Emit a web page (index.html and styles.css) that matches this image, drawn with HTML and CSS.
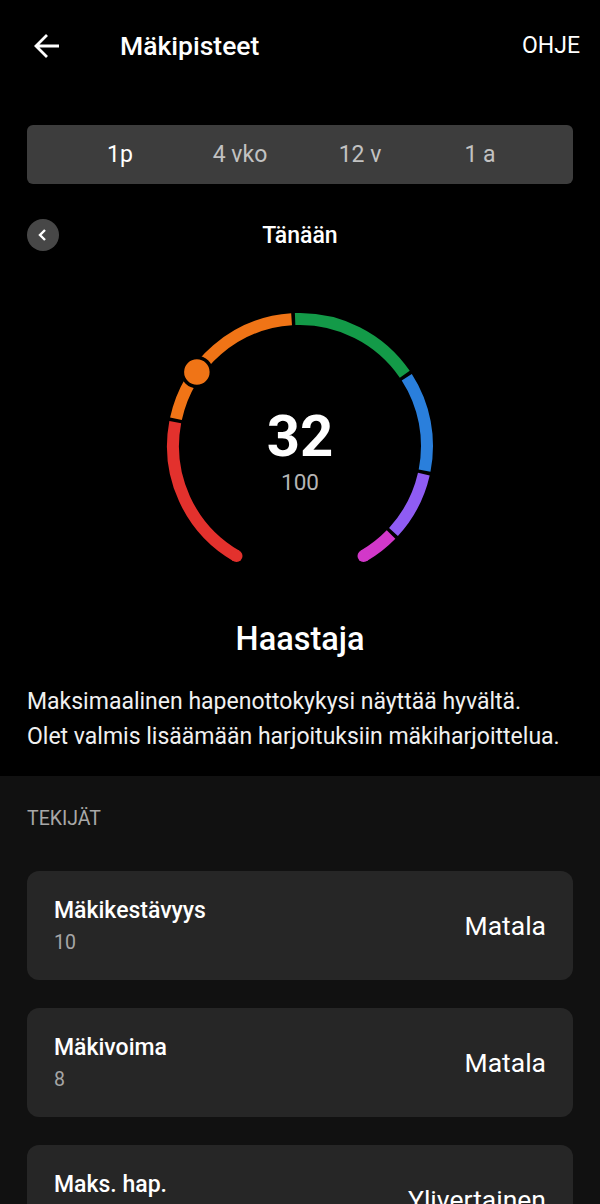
FILE: index.html
```html
<!DOCTYPE html>
<html lang="fi">
<head>
    <meta charset="UTF-8">
    <meta name="viewport" content="width=device-width, initial-scale=1.0">
    <title>Mäkipisteet</title>
    <link rel="stylesheet" href="styles.css">
</head>
<body>

<header class="topbar">
    <svg class="back" width="26" height="26" viewBox="0 0 26 26">
        <path d="M25 13H2.5M13 2L2 13l11 11" fill="none" stroke="#fff" stroke-width="2.8"/>
    </svg>
    <h1 class="title">Mäkipisteet</h1>
    <span class="help">OHJE</span>
</header>

<section class="range">
    <div class="tabs">
        <span class="tab active">1p</span>
        <span class="tab">4 vko</span>
        <span class="tab">12 v</span>
        <span class="tab">1 a</span>
    </div>

    <div class="day">
        <span class="prev">
            <svg width="12" height="14" viewBox="0 0 12 14">
                <path d="M8 2L3 7l5 5" fill="none" stroke="#fff" stroke-width="2.4"/>
            </svg>
        </span>
        <span class="day-label">Tänään</span>
    </div>
</section>

<section class="gauge">
    <svg class="ring" width="300" height="280" viewBox="0 0 300 280">
        <g fill="none" stroke-width="12">
            <!-- punainen 0-23 -->
            <path d="M86.5 250 A127 127 0 0 1 25.25 116.2" stroke="#e3312d"/>
            <!-- oranssi -->
            <path d="M25.96 112.73 A127 127 0 0 1 141.58 13.28" stroke="#f07416"/>
            <!-- vihreä -->
            <path d="M145.12 13.09 A127 127 0 0 1 254.79 68.25" stroke="#139a48"/>
            <!-- sininen -->
            <path d="M256.76 71.2 A127 127 0 0 1 274.59 164.66" stroke="#2a7fdc"/>
            <!-- violetti -->
            <path d="M273.84 168.14 A127 127 0 0 1 243.48 225.96" stroke="#8f5cf3"/>
            <!-- magenta -->
            <path d="M241.05 228.54 A127 127 0 0 1 213.5 250" stroke="#d238c9"/>
        </g>
        <circle cx="86.5" cy="250" r="6" fill="#e3312d"/>
        <circle cx="213.5" cy="250" r="6" fill="#d238c9"/>
        <circle cx="46.86" cy="65.9" r="14.5" fill="#f07416" stroke="#000" stroke-width="3.5"/>
    </svg>
    <div class="score">
        <div class="value">32</div>
        <div class="max">100</div>
    </div>
</section>

<section class="summary">
    <h2>Haastaja</h2>
    <p>Maksimaalinen hapenottokykysi näyttää hyvältä.<br>Olet valmis lisäämään harjoituksiin mäkiharjoittelua.</p>
</section>

<section class="factors">
    <div class="section-title">TEKIJÄT</div>

    <div class="card">
        <div>
            <div class="card-name">Mäkikestävyys</div>
            <div class="card-num">10</div>
        </div>
        <div class="card-level">Matala</div>
    </div>

    <div class="card">
        <div>
            <div class="card-name">Mäkivoima</div>
            <div class="card-num">8</div>
        </div>
        <div class="card-level">Matala</div>
    </div>

    <div class="card">
        <div>
            <div class="card-name">Maks. hap.</div>
            <div class="card-num">51</div>
        </div>
        <div class="card-level">Ylivertainen</div>
    </div>
</section>

</body>
</html>
```

FILE: styles.css
```css
body {
    font-family: Roboto, "Noto Sans", sans-serif;
    background-color: #000;
    color: #fff;
    margin: 0;
    padding: 0;
}

.topbar {
    display: flex;
    align-items: center;
    height: 90px;
    padding: 0 20px 0 34px;
}

.back {
    display: block;
    margin-top: 1px;
}

.title {
    flex: 1;
    margin: 0 0 0 60px;
    font-size: 26.5px;
    font-weight: 500;
}

.help {
    font-size: 23px;
}

.range {
    padding: 35px 27px 0;
}

.tabs {
    display: flex;
    height: 59px;
    padding: 0 33px;
    background-color: #3d3d3d;
    border-radius: 6px;
}

.tab {
    flex: 1;
    display: flex;
    align-items: center;
    justify-content: center;
    font-size: 23px;
    color: #c2c2c2;
}

.tab.active {
    color: #fff;
}

.day {
    position: relative;
    display: flex;
    align-items: center;
    justify-content: center;
    height: 32px;
    margin-top: 35px;
}

.prev {
    position: absolute;
    left: 0;
    top: 0;
    width: 32px;
    height: 32px;
    border-radius: 50%;
    background-color: #474747;
    display: flex;
    align-items: center;
    justify-content: center;
}

.day-label {
    font-size: 23px;
    font-weight: 500;
}

.gauge {
    position: relative;
    width: 300px;
    height: 280px;
    margin: 55px auto 0;
}

.ring {
    display: block;
}

.score {
    position: absolute;
    left: 0;
    right: 0;
    top: 98px;
    text-align: center;
}

.value {
    font-size: 58px;
    font-weight: 700;
    line-height: 64px;
}

.max {
    font-size: 22.5px;
    color: #b5b5b5;
    margin-top: 1px;
}

.summary {
    padding: 34px 27px 22px;
}

.summary h2 {
    margin: 0;
    text-align: center;
    font-size: 32.5px;
    font-weight: 500;
}

.summary p {
    margin: 26px 0 0;
    font-size: 23px;
    line-height: 35px;
    color: #f0f0f0;
}

.factors {
    background-color: #111;
    padding: 31px 27px 40px;
}

.section-title {
    font-size: 19.5px;
    color: #a8a8a8;
    margin-bottom: 41px;
}

.card {
    display: flex;
    align-items: center;
    justify-content: space-between;
    height: 109px;
    padding: 0 27px;
    margin-bottom: 28px;
    background-color: #262626;
    border-radius: 12px;
}

.card-name {
    font-size: 23px;
    font-weight: 500;
}

.card-num {
    font-size: 19.5px;
    color: #a6a6a6;
    margin-top: 7px;
}

.card-level {
    font-size: 26.5px;
}
```
